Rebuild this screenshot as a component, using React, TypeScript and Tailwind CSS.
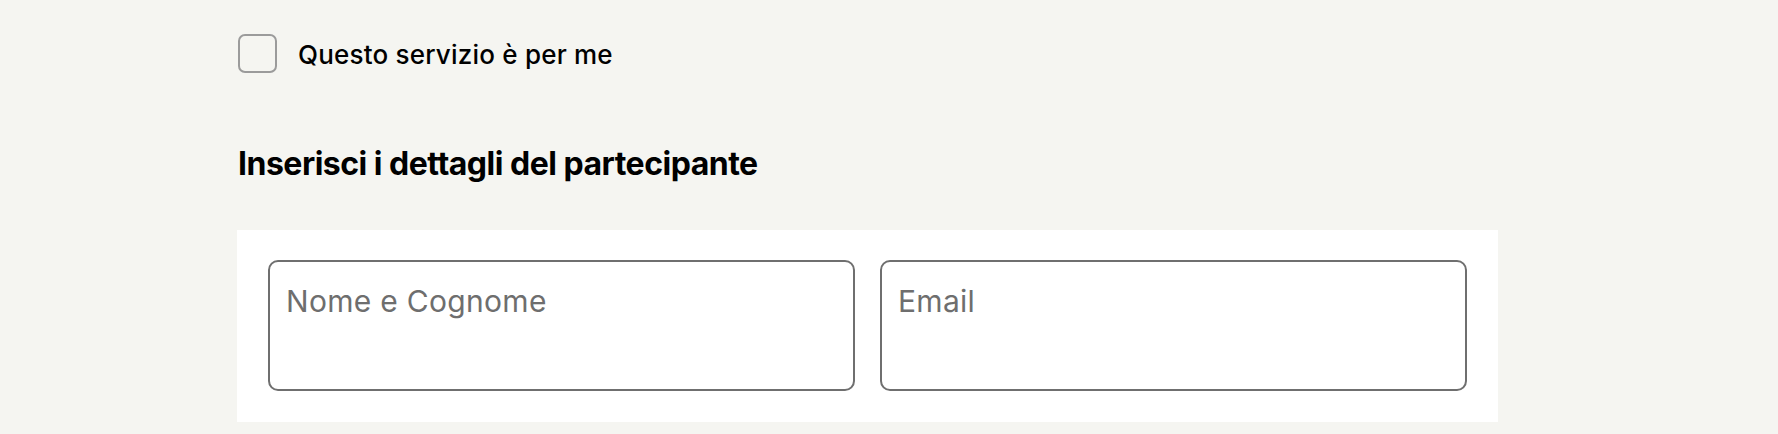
import React from "react";

function Field({ placeholder }: { placeholder: string }) {
  return (
    <textarea
      placeholder={placeholder}
      className="block h-[131px] w-full resize-none rounded-[10px] border-2 border-[#6f6f6f] bg-white pl-[16px] pt-[21px] text-[30px] leading-[36px] tracking-[0.3px] text-[#1a1a1a] outline-none placeholder:text-[#6e6e6e]"
    />
  );
}

export default function App() {
  return (
    <div className="min-h-[434px] w-full bg-[#f5f5f1] font-['Inter',sans-serif] text-black">
      <div className="ml-[238px] w-[1260px] pt-[34px]">
        <label className="flex h-[39px] items-center gap-[21px]">
          <span className="box-border block h-[39px] w-[39px] shrink-0 rounded-[7px] border-2 border-[#9b9b9b]" />
          <span className="pt-[2px] text-[26px] font-medium leading-[39px] tracking-[0.2px]">Questo servizio è per me</span>
        </label>
        <h2 className="mt-[71px] text-[32px] font-bold leading-[40px] tracking-[-0.5px]">
          Inserisci i dettagli del partecipante
        </h2>
        <div className="-ml-[1px] mt-[46px] grid grid-cols-2 gap-[25px] bg-white px-[31px] pb-[31px] pt-[30px]">
          <Field placeholder="Nome e Cognome" />
          <Field placeholder="Email" />
        </div>
      </div>
    </div>
  );
}
